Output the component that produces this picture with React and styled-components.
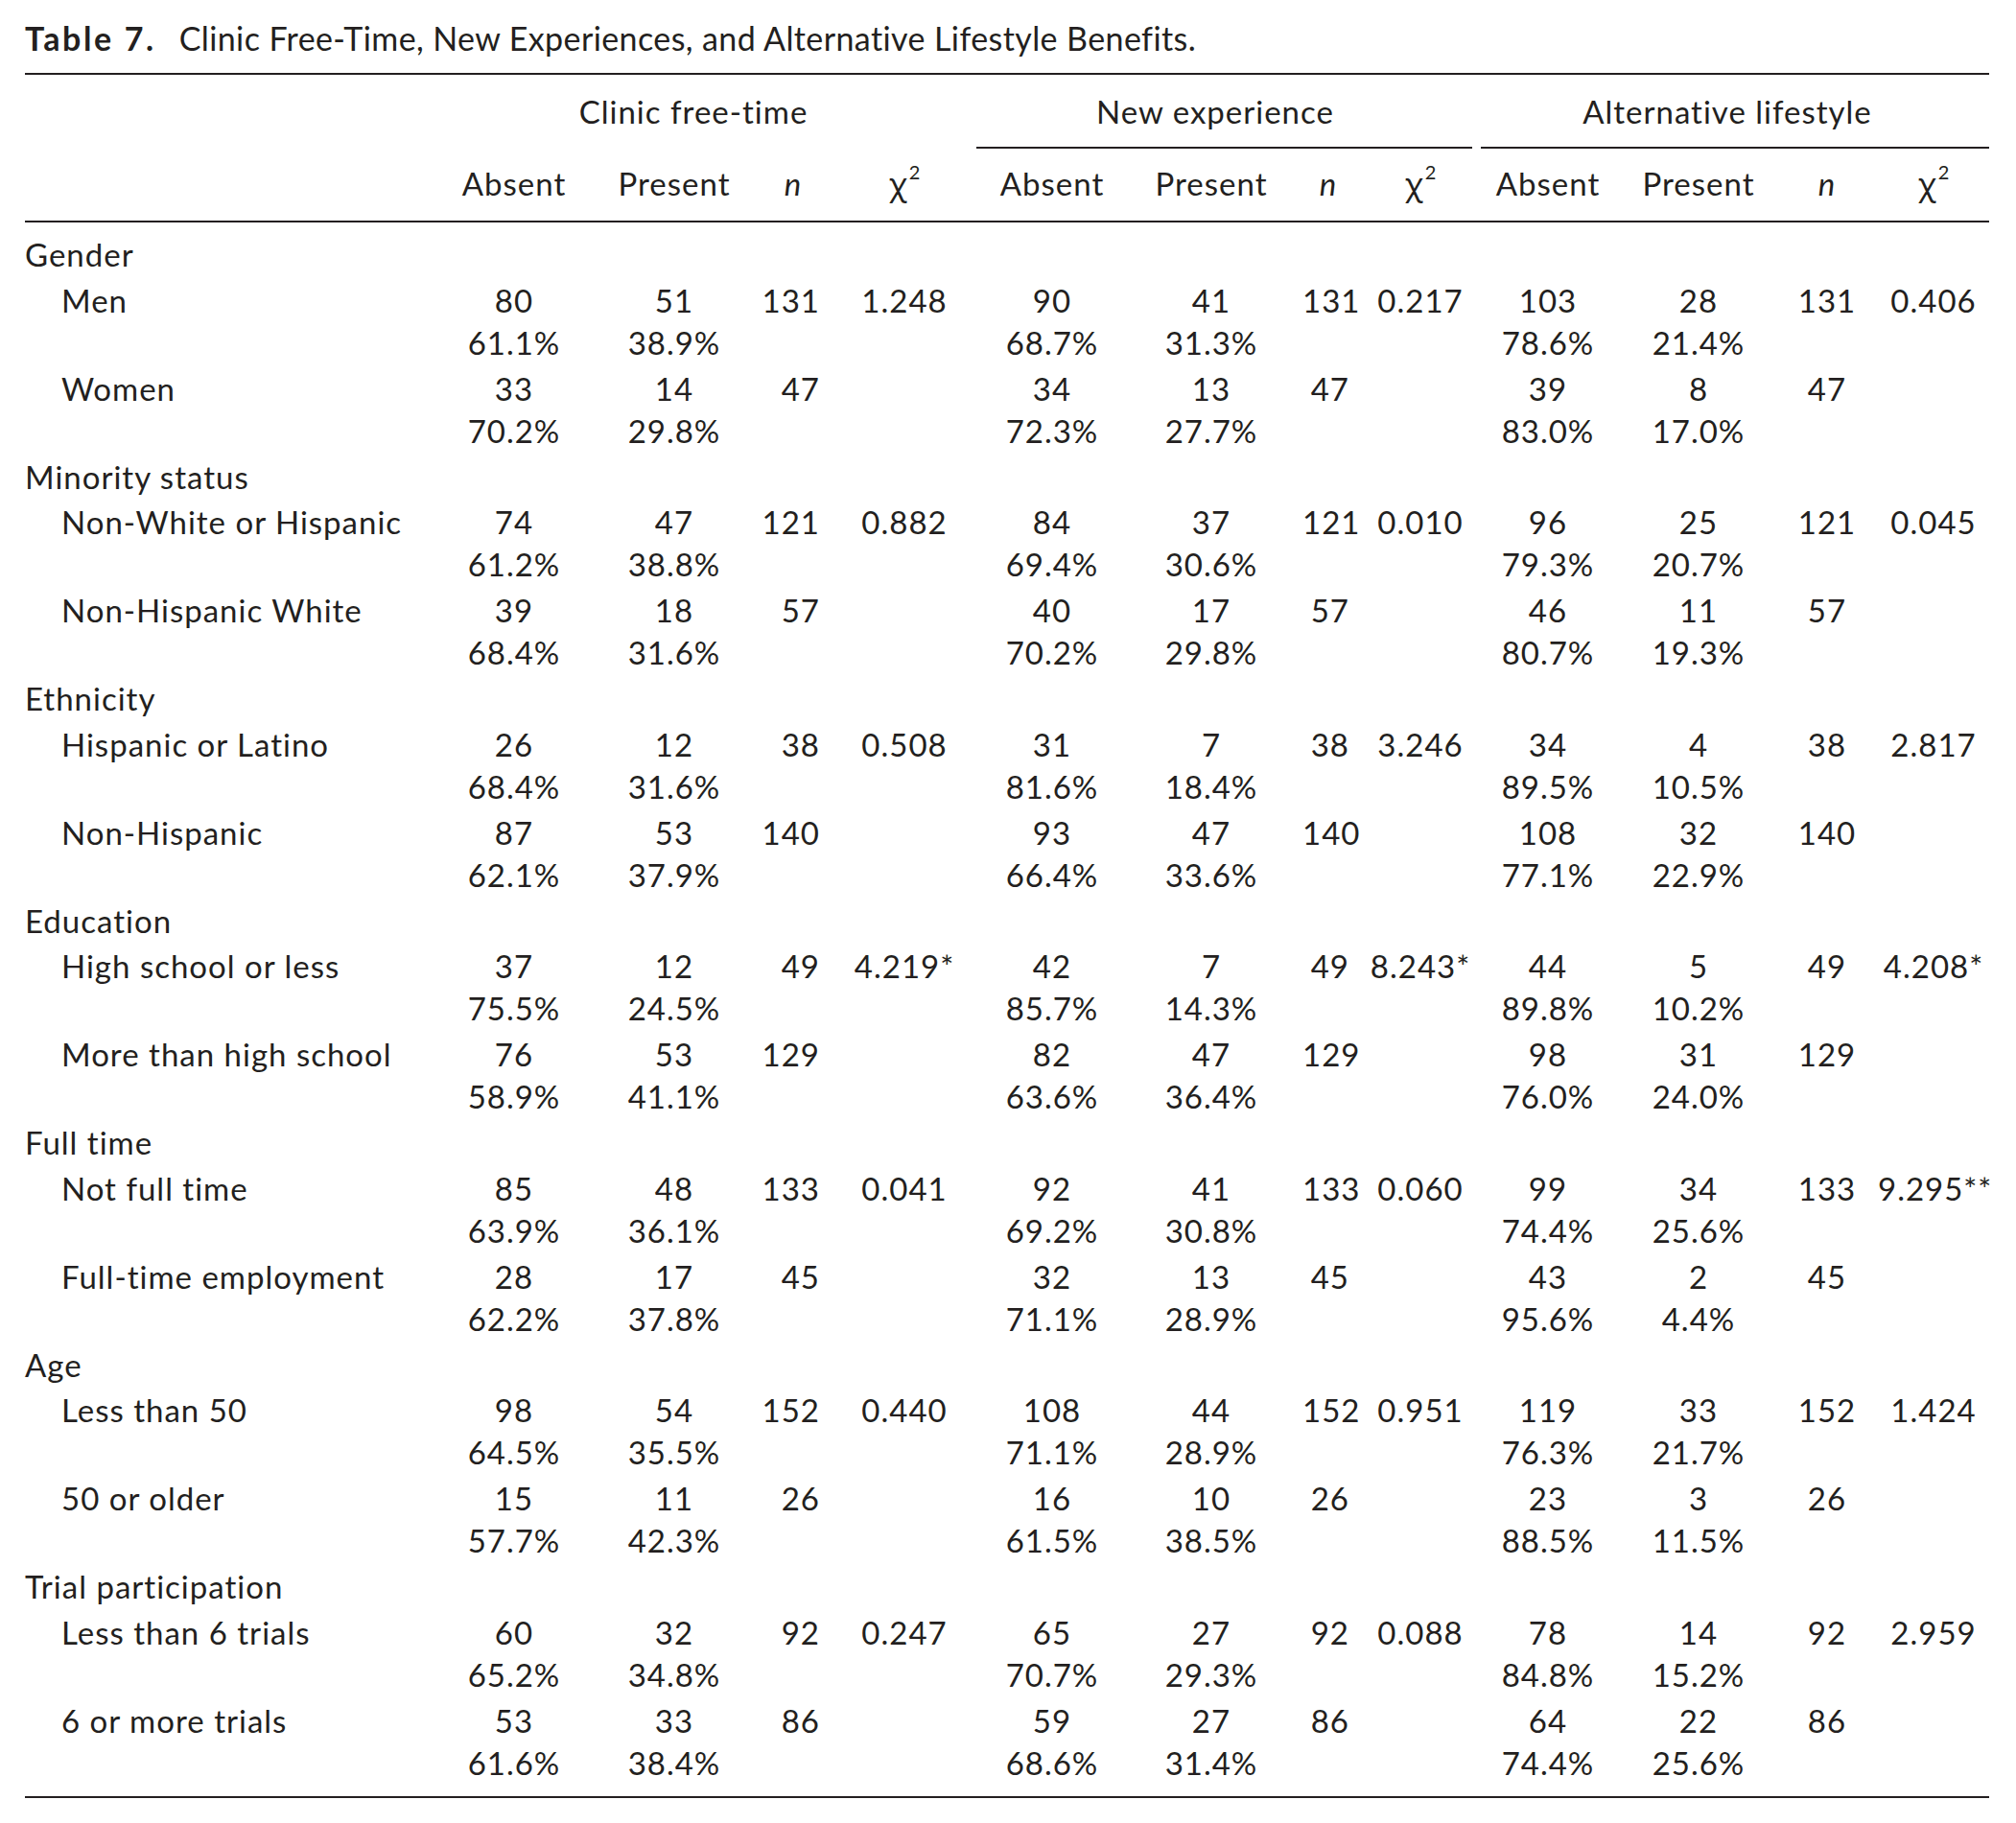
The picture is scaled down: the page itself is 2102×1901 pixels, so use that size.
import React from 'react';
import styled, { createGlobalStyle } from 'styled-components';

const GlobalStyle = createGlobalStyle`
  html, body { margin: 0; padding: 0; background: #ffffff; }
  body {
    font-family: Lato, "Open Sans", "Noto Sans", sans-serif;
    color: #231f20;
  }
`;

const COLS = '434px 152px 182px 66px 166px 142px 190px 54px 138px 128px 186px 82px 128px';
const INK = '#231f20';

const Page = styled.div`
  width: 2048px;
  padding: 17px 0 0 26px;
  font-size: 33px;
  letter-spacing: 1px;
`;

const Caption = styled.div`
  font-size: 34px;
  line-height: 46px;
  letter-spacing: 0.4px;
  white-space: nowrap;
`;

const CaptionLabel = styled.span`
  font-weight: 700;
  letter-spacing: 2.6px;
  margin-right: 24px;
`;

const Rule = styled.div`
  height: 2px;
  background: ${INK};
  margin-top: ${(p) => p.$top || 0}px;
`;

const GridRow = styled.div`
  display: grid;
  grid-template-columns: ${COLS};
  white-space: nowrap;
`;

const Spanner = styled.div`
  grid-column: span 4;
  margin: 0 ${(p) => p.$insetRight || 0}px 0 ${(p) => p.$insetLeft || 0}px;
  padding-top: 15px;
  display: flex;
  flex-direction: column;
`;

const SpannerText = styled.div`
  line-height: 46px;
  text-align: center;
  padding-right: ${(p) => p.$shift || 0}px;
`;

const SpannerRule = styled.div`
  margin-top: 14px;
  height: 2px;
  background: ${(p) => (p.$visible ? INK : 'transparent')};
`;

const HeaderRow = styled(GridRow)`
  padding: 13px 0 15px;
  line-height: 46px;
`;

const HeadCell = styled.div`
  text-align: center;
  font-style: ${(p) => (p.$italic ? 'italic' : 'normal')};
  padding-left: ${(p) => p.$padLeft || 0}px;
`;

const Chi = styled.span`
  font-family: "Noto Sans", "DejaVu Sans", sans-serif;
  font-size: 32px;
  letter-spacing: 0;
`;

const Sup = styled.sup`
  font-size: 20px;
  line-height: 0;
  vertical-align: 17px;
  margin-left: 2px;
  letter-spacing: 0;
`;

const Body = styled.div`
  padding-top: 10.25px;
`;

const GroupRow = styled.div`
  line-height: 47.5px;
  white-space: nowrap;
`;

const DataRow = styled(GridRow)`
  padding: 1px 0 3px;
  line-height: 44px;
`;

const RowLabel = styled.div`
  padding-left: 38px;
`;

const Cell = styled.div`
  text-align: ${(p) => p.$align || 'center'};
  padding-left: ${(p) => p.$padLeft || 0}px;
  padding-right: ${(p) => p.$padRight || 0}px;
`;

const Line = styled.div`
  height: 44px;
`;

const groups = [
  {
    label: 'Gender',
    rows: [
      { label: 'Men', d: [[80, '61.1%', 51, '38.9%', 131, '1.248'], [90, '68.7%', 41, '31.3%', 131, '0.217'], [103, '78.6%', 28, '21.4%', 131, '0.406']] },
      { label: 'Women', d: [[33, '70.2%', 14, '29.8%', 47, ''], [34, '72.3%', 13, '27.7%', 47, ''], [39, '83.0%', 8, '17.0%', 47, '']] },
    ],
  },
  {
    label: 'Minority status',
    rows: [
      { label: 'Non-White or Hispanic', d: [[74, '61.2%', 47, '38.8%', 121, '0.882'], [84, '69.4%', 37, '30.6%', 121, '0.010'], [96, '79.3%', 25, '20.7%', 121, '0.045']] },
      { label: 'Non-Hispanic White', d: [[39, '68.4%', 18, '31.6%', 57, ''], [40, '70.2%', 17, '29.8%', 57, ''], [46, '80.7%', 11, '19.3%', 57, '']] },
    ],
  },
  {
    label: 'Ethnicity',
    rows: [
      { label: 'Hispanic or Latino', d: [[26, '68.4%', 12, '31.6%', 38, '0.508'], [31, '81.6%', 7, '18.4%', 38, '3.246'], [34, '89.5%', 4, '10.5%', 38, '2.817']] },
      { label: 'Non-Hispanic', d: [[87, '62.1%', 53, '37.9%', 140, ''], [93, '66.4%', 47, '33.6%', 140, ''], [108, '77.1%', 32, '22.9%', 140, '']] },
    ],
  },
  {
    label: 'Education',
    rows: [
      { label: 'High school or less', d: [[37, '75.5%', 12, '24.5%', 49, '4.219*'], [42, '85.7%', 7, '14.3%', 49, '8.243*'], [44, '89.8%', 5, '10.2%', 49, '4.208*']] },
      { label: 'More than high school', d: [[76, '58.9%', 53, '41.1%', 129, ''], [82, '63.6%', 47, '36.4%', 129, ''], [98, '76.0%', 31, '24.0%', 129, '']] },
    ],
  },
  {
    label: 'Full time',
    rows: [
      { label: 'Not full time', d: [[85, '63.9%', 48, '36.1%', 133, '0.041'], [92, '69.2%', 41, '30.8%', 133, '0.060'], [99, '74.4%', 34, '25.6%', 133, '9.295**']] },
      { label: 'Full-time employment', d: [[28, '62.2%', 17, '37.8%', 45, ''], [32, '71.1%', 13, '28.9%', 45, ''], [43, '95.6%', 2, '4.4%', 45, '']] },
    ],
  },
  {
    label: 'Age',
    rows: [
      { label: 'Less than 50', d: [[98, '64.5%', 54, '35.5%', 152, '0.440'], [108, '71.1%', 44, '28.9%', 152, '0.951'], [119, '76.3%', 33, '21.7%', 152, '1.424']] },
      { label: '50 or older', d: [[15, '57.7%', 11, '42.3%', 26, ''], [16, '61.5%', 10, '38.5%', 26, ''], [23, '88.5%', 3, '11.5%', 26, '']] },
    ],
  },
  {
    label: 'Trial participation',
    rows: [
      { label: 'Less than 6 trials', d: [[60, '65.2%', 32, '34.8%', 92, '0.247'], [65, '70.7%', 27, '29.3%', 92, '0.088'], [78, '84.8%', 14, '15.2%', 92, '2.959']] },
      { label: '6 or more trials', d: [[53, '61.6%', 33, '38.4%', 86, ''], [59, '68.6%', 27, '31.4%', 86, ''], [64, '74.4%', 22, '25.6%', 86, '']] },
    ],
  },
];

const spanners = [
  { title: 'Clinic free-time', ruled: false, insetLeft: 0, insetRight: 0, shift: 40 },
  { title: 'New experience', ruled: true, insetLeft: -8, insetRight: 15, shift: 19 },
  { title: 'Alternative lifestyle', ruled: true, insetLeft: -6, insetRight: 0, shift: 16 },
];

// per block: alignment of the n column and extra left padding of the chi-square column
const blockStyle = [
  { nAlign: 'right', nPad: 5, chiPad: 0 },
  { nAlign: 'right', nPad: 5, chiPad: 0 },
  { nAlign: 'center', nPad: 0, chiPad: 12 },
];

function ChiSquare() {
  return (
    <>
      <Chi>χ</Chi>
      <Sup>2</Sup>
    </>
  );
}

function DataLine({ row }) {
  return (
    <DataRow>
      <RowLabel>{row.label}</RowLabel>
      {row.d.map((b, i) => (
        <React.Fragment key={i}>
          <Cell>
            <Line>{b[0]}</Line>
            <Line>{b[1]}</Line>
          </Cell>
          <Cell>
            <Line>{b[2]}</Line>
            <Line>{b[3]}</Line>
          </Cell>
          <Cell $align={blockStyle[i].nAlign} $padRight={blockStyle[i].nPad}>
            <Line>{b[4]}</Line>
          </Cell>
          <Cell $padLeft={blockStyle[i].chiPad}>
            <Line>{b[5]}</Line>
          </Cell>
        </React.Fragment>
      ))}
    </DataRow>
  );
}

export default function App() {
  return (
    <>
      <GlobalStyle />
      <Page>
        <Caption>
          <CaptionLabel>Table 7.</CaptionLabel>
          Clinic Free-Time, New Experiences, and Alternative Lifestyle Benefits.
        </Caption>
        <Rule $top={13} />
        <GridRow>
          <div />
          {spanners.map((s) => (
            <Spanner key={s.title} $insetLeft={s.insetLeft} $insetRight={s.insetRight}>
              <SpannerText $shift={s.shift}>{s.title}</SpannerText>
              <SpannerRule $visible={s.ruled} />
            </Spanner>
          ))}
        </GridRow>
        <HeaderRow>
          <div />
          {blockStyle.map((b, i) => (
            <React.Fragment key={i}>
              <HeadCell>Absent</HeadCell>
              <HeadCell>Present</HeadCell>
              <HeadCell $italic>n</HeadCell>
              <HeadCell $padLeft={b.chiPad}>
                <ChiSquare />
              </HeadCell>
            </React.Fragment>
          ))}
        </HeaderRow>
        <Rule />
        <Body>
          {groups.map((g) => (
            <React.Fragment key={g.label}>
              <GroupRow>{g.label}</GroupRow>
              {g.rows.map((r) => (
                <DataLine key={r.label} row={r} />
              ))}
            </React.Fragment>
          ))}
        </Body>
        <Rule $top={10.5} />
      </Page>
    </>
  );
}
